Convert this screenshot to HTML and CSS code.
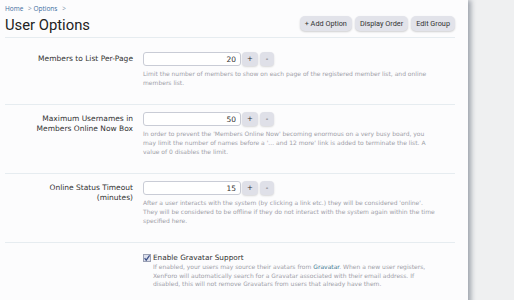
FILE: index.html
```html
<!DOCTYPE html>
<html lang="en">

<head>
    <meta charset="utf-8">
    <title>User Options</title>
    <link rel="stylesheet" href="styles.css">
</head>

<body>
    <div class="panel">
        <header class="titlebar">
            <div>
                <nav class="crumbs">
                    <a href="#">Home</a> &gt;
                    <a href="#">Options</a> &gt;
                </nav>
                <h1>User Options</h1>
            </div>
            <div class="actions">
                <button>+ Add Option</button>
                <button>Display Order</button>
                <button>Edit Group</button>
            </div>
        </header>

        <form>
            <dl class="option first">
                <dt>Members to List Per-Page</dt>
                <dd>
                    <div class="spinner">
                        <input type="text" value="20">
                        <button type="button">+</button>
                        <button type="button">-</button>
                    </div>
                    <p class="explain">Limit the number of members to show on each page of the registered member list, and online members list.</p>
                </dd>
            </dl>

            <dl class="option">
                <dt>Maximum Usernames in Members Online Now Box</dt>
                <dd>
                    <div class="spinner">
                        <input type="text" value="50">
                        <button type="button">+</button>
                        <button type="button">-</button>
                    </div>
                    <p class="explain">In order to prevent the 'Members Online Now' becoming enormous on a very busy board, you may limit the number of names before a '... and 12 more' link is added to terminate the list. A value of 0 disables the limit.</p>
                </dd>
            </dl>

            <dl class="option">
                <dt>Online Status Timeout (minutes)</dt>
                <dd>
                    <div class="spinner">
                        <input type="text" value="15">
                        <button type="button">+</button>
                        <button type="button">-</button>
                    </div>
                    <p class="explain">After a user interacts with the system (by clicking a link etc.) they will be considered 'online'. They will be considered to be offline if they do not interact with the system again within the time specified here.</p>
                </dd>
            </dl>

            <dl class="option">
                <dt></dt>
                <dd>
                    <label class="check">
                        <span class="box">
                            <svg width="8" height="8" viewBox="0 0 8 8">
                                <path d="M1.6 4.2 L3.2 6.2 L6.6 1.4" fill="none" stroke="#3b4f86" stroke-width="1.2"/>
                            </svg>
                        </span>
                        Enable Gravatar Support
                    </label>
                    <p class="explain indent">If enabled, your users may source their avatars from <a href="#">Gravatar</a>. When a new user registers, XenForo will automatically search for a Gravatar associated with their email address. If disabled, this will not remove Gravatars from users that already have them.</p>
                </dd>
            </dl>
        </form>
    </div>
</body></html>
```

FILE: styles.css
```css
* {
    box-sizing: border-box;
}

body {
    margin: 0;
    background-color: #eff0f1;
    font-family: "DejaVu Sans", sans-serif;
    display: flex;
}

.panel {
    width: 468px;
    min-height: 100vh;
    background-color: #fcfcfd;
    padding: 0 13px 0 5px;
    box-shadow: 3px 0 5px rgba(60, 70, 90, 0.45);
}

.titlebar {
    display: flex;
    justify-content: space-between;
    align-items: flex-end;
    height: 38px;
    border-bottom: 1px solid #e6ecf0;
    padding-bottom: 3px;
}

.crumbs {
    font-family: "Open Sans", sans-serif;
    font-size: 6.5px;
    line-height: 9px;
    color: #7a8ea8;
}

.crumbs a {
    color: #3d6d9e;
    text-decoration: none;
    margin-right: 3px;
}

h1 {
    font-family: Roboto, sans-serif;
    font-weight: 400;
    font-size: 14.8px;
    line-height: 18px;
    color: #222;
    margin: 3px 0 0;
}

.actions {
    display: flex;
    gap: 3px;
    margin-bottom: 3px;
}

.actions button {
    border: none;
    height: 15px;
    padding: 0 5px;
    font-family: Roboto, sans-serif;
    font-size: 7.3px;
    color: #333;
    background-color: #e2e3ea;
    border-radius: 5px;
    box-shadow: 0 1px 2px rgba(0, 0, 0, 0.18);
}

.option {
    display: grid;
    grid-template-columns: 128px 1fr;
    column-gap: 10px;
    margin: 0;
    padding: 7px 0 17px;
    border-bottom: 1px solid #e6ecf0;
}

.option.first {
    margin-top: 7px;
}

.option dt {
    text-align: right;
    font-size: 7.5px;
    line-height: 10px;
    color: #333;
    padding: 2px 0 0 28px;
}

.option dd {
    margin: 0;
}

.spinner {
    display: flex;
    align-items: center;
}

.spinner input {
    width: 98px;
    height: 14px;
    border: 1px solid #c9ccd6;
    border-radius: 3px;
    background-color: #fff;
    text-align: right;
    padding: 0 4px;
    font-family: "DejaVu Sans", sans-serif;
    font-size: 7.5px;
    color: #333;
}

.spinner button {
    border: none;
    height: 14px;
    padding: 0;
    font-family: "DejaVu Sans", sans-serif;
    font-size: 7px;
    color: #333;
    background-color: #dfe0e8;
    border-radius: 4px;
    box-shadow: 0 1px 2px rgba(0, 0, 0, 0.15);
}

.spinner button:nth-of-type(1) {
    width: 16px;
    margin-left: 1px;
}

.spinner button:nth-of-type(2) {
    width: 14px;
    margin-left: 2px;
}

.explain {
    width: 295px;
    margin: 3px 0 0;
    font-size: 6px;
    line-height: 9px;
    color: #a0a0a8;
}

.explain.indent {
    margin: 0 0 0 10px;
    width: 285px;
    line-height: 8.6px;
}

.explain a {
    color: #3f7a92;
    text-decoration: none;
}

.check {
    display: flex;
    align-items: center;
    gap: 2px;
    font-size: 7.3px;
    line-height: 10px;
    color: #333;
    height: 10px;
    margin-top: 3px;
}

.check .box {
    width: 8px;
    height: 8px;
    border: 1px solid #9aa0b4;
    background-color: #dde0ec;
    display: flex;
}

.check svg {
    display: block;
    margin: -1px;
}
```
